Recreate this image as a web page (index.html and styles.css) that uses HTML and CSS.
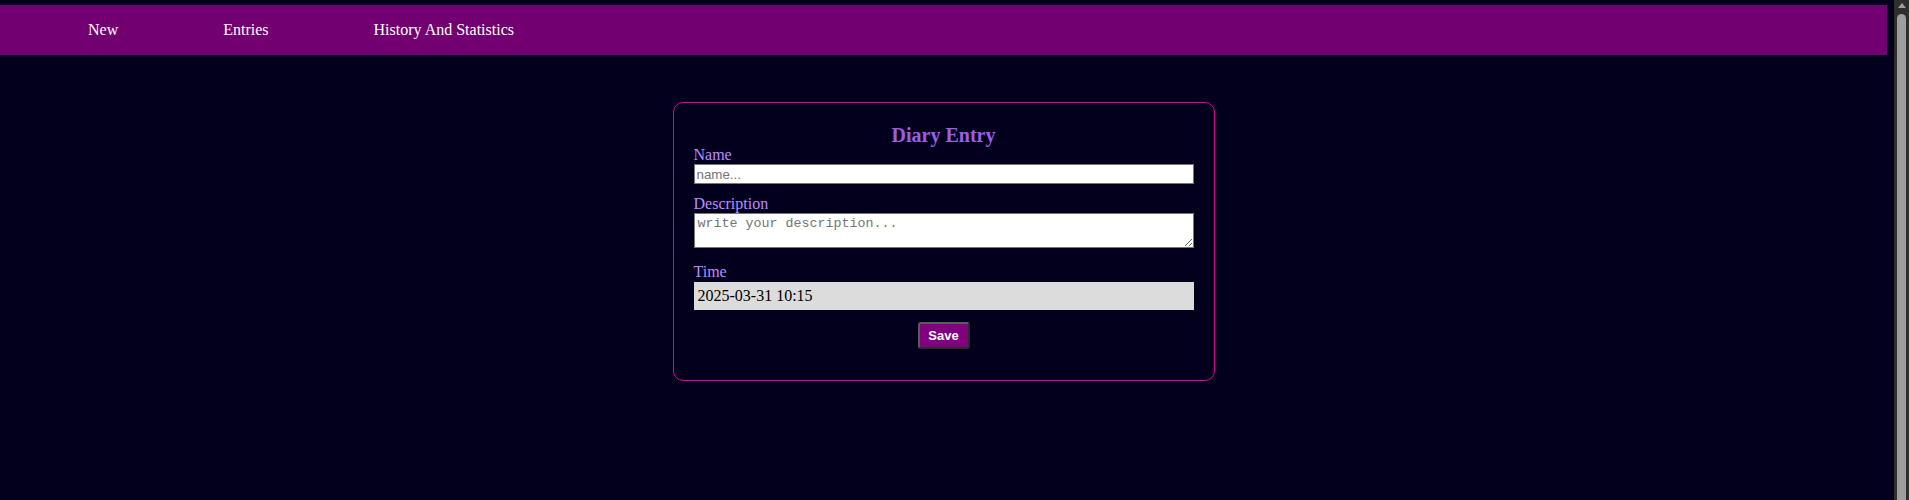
FILE: index.html
```html
<!DOCTYPE html>
<html lang="en">
<head>
<meta charset="utf-8">
<title>Diary</title>
<link rel="stylesheet" href="styles.css">
</head>
<body>
<nav class="topnav">
  <a class="nav-link" href="#">New</a>
  <a class="nav-link" href="#">Entries</a>
  <a class="nav-link" href="#">History And Statistics</a>
</nav>
<main class="main">
  <form class="card">
    <h2 class="card-title">Diary Entry</h2>
    <label class="field-label" for="name">Name</label>
    <input class="text-input" id="name" type="text" placeholder="name...">
    <label class="field-label" for="desc">Description</label>
    <textarea class="text-area" id="desc" placeholder="write your description..."></textarea>
    <label class="field-label" for="time">Time</label>
    <div class="time-box" id="time">2025-03-31 10:15</div>
    <div class="actions">
      <button class="save-btn" type="button">Save</button>
    </div>
  </form>
</main>
<div class="fake-scrollbar" aria-hidden="true">
  <div class="scroll-arrow"></div>
  <div class="scroll-thumb"></div>
</div>
</body>
</html>
```
FILE: styles.css
```css
html {
  background: #03001e;
  overflow: hidden;
}
body {
  margin: 5px 22px 0 0;
  background: #03001e;
  font-family: "Liberation Serif", "Times New Roman", serif;
  font-size: 16px;
}
.topnav {
  height: 50px;
  background: #730070;
  display: flex;
  align-items: center;
  gap: 105px;
  padding-left: 88px;
}
.nav-link {
  color: #ffffff;
  text-decoration: none;
  font-size: 16px;
  line-height: 18px;
}
.main {
  display: flex;
  justify-content: center;
  padding-top: 47px;
}
.card {
  width: 500px;
  border: 1px solid #e0009c;
  border-radius: 10px;
  padding: 21px 20px 31px 20px;
  display: flex;
  flex-direction: column;
  background: #03001e;
}
.card-title {
  margin: 0;
  text-align: center;
  font-size: 20px;
  line-height: 22px;
  font-weight: bold;
  color: #9b5fe3;
}
.field-label {
  color: #bb8cff;
  font-size: 16px;
  line-height: 18px;
  height: 18px;
}
.text-input {
  box-sizing: border-box;
  width: 100%;
  height: 20px;
  margin: 0 0 11px 0;
  padding: 1px 2px;
  border: 1px solid #767676;
  background: #ffffff;
  color: #000;
  font-family: "Liberation Sans", Arial, sans-serif;
  font-size: 13.33px;
}
.text-input::placeholder {
  color: #757575;
}
.text-area {
  box-sizing: border-box;
  width: 100%;
  height: 35px;
  margin: 0 0 15px 0;
  padding: 2px 3px;
  border: 1px solid #767676;
  background: #ffffff;
  color: #000;
  font-family: "Liberation Mono", "DejaVu Sans Mono", monospace;
  font-size: 13.33px;
}
.text-area::placeholder {
  color: #757575;
}
.time-box {
  box-sizing: border-box;
  margin-top: 1px;
  height: 28px;
  padding: 0 4px;
  background: #dcdcdc;
  color: #000;
  display: flex;
  align-items: center;
  font-size: 16px;
}
.actions {
  display: flex;
  justify-content: center;
  margin-top: 12px;
}
.save-btn {
  box-sizing: border-box;
  width: 52px;
  height: 27px;
  padding: 0;
  background: #800080;
  color: #ffffff;
  border: 2px solid;
  border-color: #5a5a5a #2a2a2a #2a2a2a #5a5a5a;
  border-radius: 3px;
  font-family: "Liberation Sans", Arial, sans-serif;
  font-weight: bold;
  font-size: 13px;
}
.fake-scrollbar {
  position: fixed;
  top: 0;
  right: 0;
  width: 15px;
  height: 100%;
  background: #2e2e2e;
  display: flex;
  flex-direction: column;
  align-items: center;
}
.scroll-arrow {
  width: 0;
  height: 0;
  margin-top: 3px;
  border-left: 4px solid transparent;
  border-right: 4px solid transparent;
  border-bottom: 5px solid #9e9e9e;
}
.scroll-thumb {
  margin-top: 6px;
  width: 9px;
  flex: 1;
  margin-bottom: -20px;
  background: #9e9e9e;
  border-radius: 5px;
}
```
